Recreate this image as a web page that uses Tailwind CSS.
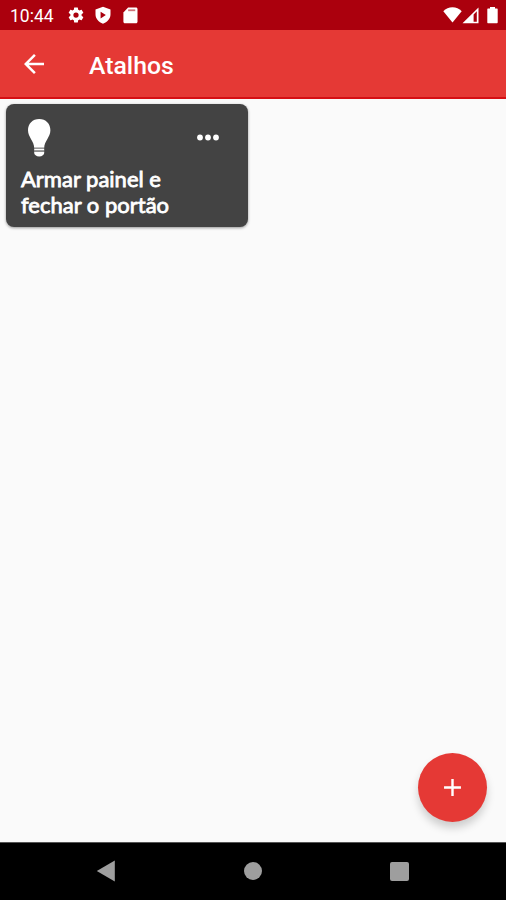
<!DOCTYPE html>
<html lang="pt-BR">
<head>
    <meta charset="UTF-8">
    <meta name="viewport" content="width=device-width, initial-scale=1.0">
    <title>Atalhos</title>
    <script src="https://cdn.jsdelivr.net/npm/@tailwindcss/browser@4"></script>
</head>
<body class="h-screen flex flex-col overflow-hidden bg-[#fafafa] font-['Roboto',sans-serif] text-white">
    <!-- Barra de status -->
    <div class="h-[30px] shrink-0 bg-[#ab000d] flex items-center justify-between pl-[10px] pr-[8px]">
        <div class="flex items-center">
            <span class="w-[57px] pt-[2px] text-[17.5px] leading-5">10:44</span>
            <svg class="w-[18px] h-[18px] mr-[9px]" viewBox="0 0 24 24" fill="currentColor">
                <path d="M19.43 12.98c.04-.32.07-.64.07-.98s-.03-.66-.07-.98l2.11-1.65c.19-.15.24-.42.12-.64l-2-3.46c-.12-.22-.39-.3-.61-.22l-2.49 1c-.52-.4-1.08-.73-1.69-.98l-.38-2.65A.49.49 0 0 0 14 2h-4c-.25 0-.46.18-.49.42l-.38 2.65c-.61.25-1.17.59-1.69.98l-2.49-1c-.23-.09-.49 0-.61.22l-2 3.46c-.13.22-.07.49.12.64l2.11 1.65c-.04.32-.07.65-.07.98s.03.66.07.98l-2.11 1.65c-.19.15-.24.42-.12.64l2 3.46c.12.22.39.3.61.22l2.49-1c.52.4 1.08.73 1.69.98l.38 2.65c.03.24.24.42.49.42h4c.25 0 .46-.18.49-.42l.38-2.65c.61-.25 1.17-.59 1.69-.98l2.49 1c.23.09.49 0 .61-.22l2-3.46c.12-.22.07-.49-.12-.64zM12 15.5a3.5 3.5 0 1 1 0-7 3.5 3.5 0 0 1 0 7z"/>
            </svg>
            <svg class="w-[18px] h-[18px] mr-[9px]" viewBox="0 0 24 24" fill="currentColor" fill-rule="evenodd">
                <path d="M12 1L2 4.500V11c0 6 4.300 10.500 10 12.500C17.700 21.500 22 17 22 11V4.500zM8.800 7.500l7 4.500-7 4.500z"/>
            </svg>
            <svg class="w-[18px] h-[18px]" viewBox="0 0 24 24" fill="currentColor">
                <path d="M20 2H9.500L3.200 8.500V21c0 1.100.9 2 2 2H20c1.100 0 2-.9 2-2V4c0-1.100-.9-2-2-2z"/>
                <path d="M9.500 4.500h9.500v2.400H9.500z" fill="#ab000d" fill-opacity=".55"/>
            </svg>
        </div>
        <div class="flex items-center">
            <svg class="w-[19px] h-[18px]" viewBox="0 0 19 18" fill="currentColor">
                <path d="M9.500 16.500L0.300 5.200C2.700 2.500 6 1.300 9.500 1.300s6.800 1.200 9.200 3.900z"/>
            </svg>
            <svg class="w-[17px] h-[18px] mr-[8px]" viewBox="0 0 17 18" fill="currentColor" fill-rule="evenodd">
                <path d="M0.500 17.300L16.500 1.500v15.800zM11.600 8.500v7.200h3.200V5.300z"/>
            </svg>
            <svg class="w-[11px] h-[18px]" viewBox="0 0 11 18" fill="currentColor">
                <path d="M3 1h5v1.500h1.700c.7 0 1 .4 1 1v12.700c0 .7-.4 1-1 1H1.300c-.7 0-1-.3-1-1V3.500c0-.6.3-1 1-1H3z"/>
            </svg>
        </div>
    </div>

    <!-- Cabeçalho -->
    <header class="h-[69px] shrink-0 bg-[#e53935] border-b-2 border-[#d50f14] flex items-center pl-[19px]">
        <svg class="w-[30px] h-[30px]" viewBox="0 0 24 24" fill="currentColor">
            <path d="M20 11H7.830l5.590-5.590L12 4l-8 8 8 8 1.410-1.410L7.830 13H20v-2z"/>
        </svg>
        <h1 class="ml-[40px] pt-[5px] text-[24.8px] leading-7 font-medium">Atalhos</h1>
    </header>

    <main class="flex-1 flex flex-col justify-between">
        <!-- Atalho -->
        <div class="w-[242px] h-[123px] mt-[5px] ml-[6px] rounded-lg bg-[#434343] shadow-[0_1px_3px_rgba(0,0,0,0.4)] pl-[15px]">
            <div class="h-[62px] flex items-start justify-between pt-[14px] pr-[29px]">
                <svg class="w-[24px] h-[40px] ml-[6px]" viewBox="0 0 24 40" fill="currentColor">
                    <path d="M12.200 1C5.600 1 1 5.800 1 12.200c0 7 6.200 10.800 6.200 17.600h10c0-6.800 6.200-10.600 6.200-17.600C23.400 5.800 18.800 1 12.200 1z"/>
                    <path d="M7.200 31h10v1.500h-10zM7.200 33.700h10v1.200c0 1.500-2 3.600-5 3.600s-5-2.100-5-3.600z"/>
                    <path d="M7.200 29.800h10V31h-10zM7.200 32.500h10v1.200h-10z" fill="#999"/>
                </svg>
                <svg class="w-[22px] h-[8px] mt-[16px]" viewBox="0 0 22 8" fill="currentColor">
                    <circle cx="3" cy="3.500" r="2.900"/>
                    <circle cx="11" cy="3.500" r="2.900"/>
                    <circle cx="19" cy="3.500" r="2.900"/>
                </svg>
            </div>
            <p class="font-['Lato',sans-serif] text-[22px] leading-[26px] font-normal [-webkit-text-stroke:0.8px_white]">Armar painel e<br>fechar o portão</p>
        </div>

        <!-- Botão adicionar -->
        <button class="self-end w-[69px] h-[69px] mr-[19px] mb-[20px] rounded-full bg-[#e53935] flex items-center justify-center shadow-[0_6px_9px_rgba(0,0,0,0.18)]">
            <svg class="w-[29px] h-[29px]" viewBox="0 0 24 24" fill="currentColor">
                <path d="M19 13h-6v6h-2v-6H5v-2h6V5h2v6h6v2z"/>
            </svg>
        </button>
    </main>

    <!-- Navegação do sistema -->
    <nav class="h-[58px] shrink-0 bg-black border-t border-[#555] flex items-center justify-between pl-[96px] pr-[97px] pb-px text-[#9e9e9e]">
        <svg class="w-[20px] h-[22px]" viewBox="0 0 20 22" fill="currentColor">
            <path d="M0.800 11L18.800 0.500v21z"/>
        </svg>
        <div class="w-[18px] h-[18px] rounded-full bg-[#9e9e9e]"></div>
        <div class="w-[19px] h-[19px] rounded-[2px] bg-[#9e9e9e]"></div>
    </nav>
</body>
</html>
